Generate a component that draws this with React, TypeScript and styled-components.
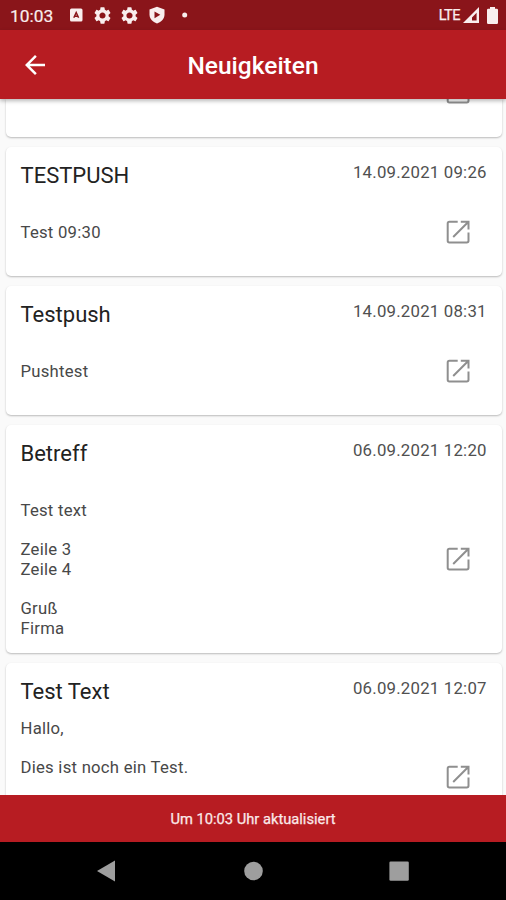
import React from "react";
import styled, { createGlobalStyle } from "styled-components";

const GlobalStyle = createGlobalStyle`
  * { box-sizing: border-box; }
  body { margin: 0; background: #fafafa; font-family: Roboto, sans-serif; }
`;

const Screen = styled.div`
  display: flex;
  flex-direction: column;
  width: 506px;
  height: 900px;
  overflow: hidden;
  background: #fafafa;
`;

const StatusBar = styled.header`
  flex: none;
  display: flex;
  align-items: center;
  height: 30px;
  padding: 0 8px 0 10px;
  background: #8a151a;
  color: #f9eeee;
`;

const Clock = styled.span`
  width: 59px;
  font-size: 17.4px;
  line-height: 20px;
  padding-top: 2px;
  -webkit-text-stroke: 0.2px #f9eeee;
`;

const Notifications = styled.div`
  display: flex;
  align-items: center;
  gap: 10px;
  flex: 1;
`;

const Network = styled.span`
  font-size: 14.5px;
  letter-spacing: -0.5px;
  margin-right: 3px;
  padding-top: 1px;
  -webkit-text-stroke: 0.25px #f9eeee;
`;

const Signals = styled.div`
  display: flex;
  align-items: center;
  gap: 8px;
`;

const AppBar = styled.div`
  flex: none;
  position: relative;
  z-index: 1;
  display: grid;
  grid-template-columns: 70px 1fr 70px;
  align-items: center;
  height: 69px;
  background: #b71c22;
  color: #fff;
  box-shadow: 0 2px 4px rgba(0, 0, 0, 0.28);
`;

const BackButton = styled.button`
  display: flex;
  justify-content: center;
  padding: 0;
  border: 0;
  background: none;
  color: inherit;
`;

const PageTitle = styled.h1`
  margin: 0;
  padding-top: 2px;
  text-align: center;
  font-size: 24.5px;
  font-weight: 500;
  line-height: 30px;
`;

const Feed = styled.main`
  flex: 1;
  min-height: 0;
  overflow: hidden;
  display: flex;
  flex-direction: column;
  justify-content: flex-start;
  gap: 10px;
  padding: 0 4.5px 0 5.5px;
`;

const Card = styled.article<{ $height: number; $clipped?: boolean }>`
  flex: none;
  display: flex;
  flex-direction: column;
  justify-content: ${(p) => (p.$clipped ? "flex-end" : "flex-start")};
  height: ${(p) => p.$height}px;
  padding: 0 15px;
  border-radius: ${(p) => (p.$clipped ? "0 0 5px 5px" : "5px")};
  background: #fff;
  box-shadow: 0 1px 2px rgba(0, 0, 0, 0.26);
`;

const CardHead = styled.div`
  display: flex;
  justify-content: space-between;
  align-items: flex-start;
  height: 52px;
  padding-top: 15px;
`;

const CardTitle = styled.h2`
  margin: 0;
  font-size: 22px;
  font-weight: 400;
  line-height: 28px;
  color: #222;
`;

const Stamp = styled.time`
  font-size: 16.8px;
  line-height: 20px;
  letter-spacing: 0.22px;
  margin-right: -0.22px;
  color: #505050;
`;

const CardBody = styled.div<{ $top: number; $height: number }>`
  display: flex;
  justify-content: space-between;
  align-items: center;
  height: ${(p) => p.$height}px;
  margin-top: ${(p) => p.$top}px;
  padding-right: 14px;
`;

const Message = styled.p`
  align-self: flex-start;
  margin: 0;
  padding-top: 1px;
  font-size: 16.7px;
  line-height: 19.65px;
  letter-spacing: 0.25px;
  white-space: pre-line;
  color: #484848;
`;

const ClippedIcon = styled.div`
  flex: none;
  display: flex;
  justify-content: flex-end;
  height: 60px;
  padding-right: 14px;
`;

const UpdateBar = styled.footer`
  flex: none;
  display: flex;
  align-items: center;
  justify-content: center;
  height: 47px;
  background: #b71c22;
  color: #fbeaea;
  font-size: 14.7px;
  -webkit-text-stroke: 0.25px #fbeaea;
`;

const NavBar = styled.nav`
  flex: none;
  display: grid;
  grid-template-columns: repeat(3, 146px);
  justify-content: center;
  align-items: center;
  justify-items: center;
  height: 58px;
  background: #000;
  color: #9e9e9e;
`;

const OpenIcon = () => (
  <svg width="30" height="30" viewBox="0 0 30 30" fill="none" stroke="#8f8f8f" strokeWidth="2">
    <path d="M14.7 4.7H6.4Q4.7 4.7 4.7 6.4V23.8Q4.7 25.5 6.4 25.5H23.8Q25.5 25.5 25.5 23.8V15.5" />
    <path d="M17.8 4.7H25.5V12.5M25.2 5L10.2 20" />
  </svg>
);

const GearIcon = () => (
  <svg width="17" height="17" viewBox="2 2 20 20" fill="currentColor">
    <path d="M19.14 12.94c.04-.3.06-.61.06-.94 0-.32-.02-.64-.07-.94l2.03-1.58a.49.49 0 0 0 .12-.61l-1.92-3.32a.488.488 0 0 0-.59-.22l-2.39.96c-.5-.38-1.03-.7-1.62-.94l-.36-2.54a.484.484 0 0 0-.48-.41h-3.84c-.24 0-.43.17-.47.41l-.36 2.54c-.59.24-1.13.57-1.62.94l-2.39-.96c-.22-.08-.47 0-.59.22L2.74 8.87c-.12.21-.08.47.12.61l2.03 1.58c-.05.3-.09.63-.09.94s.02.64.07.94l-2.03 1.58a.49.49 0 0 0-.12.61l1.92 3.32c.12.22.37.29.59.22l2.39-.96c.5.38 1.03.7 1.62.94l.36 2.54c.05.24.24.41.48.41h3.84c.24 0 .44-.17.47-.41l.36-2.54c.59-.24 1.13-.56 1.62-.94l2.39.96c.22.08.47 0 .59-.22l1.92-3.32c.12-.22.07-.47-.12-.61l-2.01-1.58zM12 15.6A3.61 3.61 0 0 1 8.4 12c0-1.98 1.62-3.6 3.6-3.6s3.6 1.62 3.6 3.6-1.62 3.6-3.6 3.6z" />
  </svg>
);

type Entry = {
  title: string;
  stamp: string;
  text: string;
  height: number;
  top: number;
  body: number;
};

const entries: Entry[] = [
  { title: "TESTPUSH", stamp: "14.09.2021 09:26", text: "Test 09:30", height: 129, top: 23, body: 20 },
  { title: "Testpush", stamp: "14.09.2021 08:31", text: "Pushtest", height: 129, top: 23, body: 20 },
  {
    title: "Betreff",
    stamp: "06.09.2021 12:20",
    text: "Test text\n\nZeile 3\nZeile 4\n\nGruß\nFirma",
    height: 228,
    top: 23,
    body: 118,
  },
  { title: "Test Text", stamp: "06.09.2021 12:07", text: "Hallo,\n\nDies ist noch ein Test.", height: 228, top: 3, body: 118 },
];

export default function App() {
  return (
    <>
      <GlobalStyle />
      <Screen>
        <StatusBar>
          <Clock>10:03</Clock>
          <Notifications>
            <svg width="15" height="14" viewBox="0 0 15 14">
              <rect x="1" y="0.5" width="12.5" height="13" rx="1.5" fill="currentColor" />
              <path d="M4.8 9.8L7.2 4.5L9.6 9.8M5.8 8.3H8.6" fill="none" stroke="#8a151a" strokeWidth="1.5" />
            </svg>
            <GearIcon />
            <GearIcon />
            <svg width="18" height="18" viewBox="0 0 18 18">
              <path d="M9 0.7L16.5 3.4V8.5C16.5 12.8 13.5 16 9 17.4C4.5 16 1.5 12.8 1.5 8.5V3.4Z" fill="currentColor" />
              <path d="M6.5 5.4L12.3 8.8L6.5 12.2Z" fill="#8a151a" />
            </svg>
            <svg width="18" height="6" viewBox="0 0 18 6">
              <circle cx="8.7" cy="3" r="2.5" fill="currentColor" />
            </svg>
          </Notifications>
          <Network>LTE</Network>
          <Signals>
            <svg width="16" height="16" viewBox="0 0 16 16">
              <path fillRule="evenodd" d="M16 0V16H0ZM13.6 5.8L9 10.6V13.6H13.6Z" fill="currentColor" />
            </svg>
            <svg width="11" height="17" viewBox="0 0 11 17">
              <path d="M3 0H8V1.7H9.8Q11 1.7 11 3V15.7Q11 17 9.8 17H1.2Q0 17 0 15.7V3Q0 1.7 1.2 1.7H3Z" fill="currentColor" />
            </svg>
          </Signals>
        </StatusBar>
        <AppBar>
          <BackButton aria-label="Zurück">
            <svg width="30" height="30" viewBox="0 0 24 24" fill="currentColor">
              <path d="M20 11H7.83l5.59-5.59L12 4l-8 8 8 8 1.41-1.41L7.83 13H20v-2z" />
            </svg>
          </BackButton>
          <PageTitle>Neuigkeiten</PageTitle>
        </AppBar>
        <Feed>
          <Card $height={38} $clipped>
            <ClippedIcon>
              <OpenIcon />
            </ClippedIcon>
          </Card>
          {entries.map((e) => (
            <Card key={e.stamp} $height={e.height}>
              <CardHead>
                <CardTitle>{e.title}</CardTitle>
                <Stamp>{e.stamp}</Stamp>
              </CardHead>
              <CardBody $top={e.top} $height={e.body}>
                <Message>{e.text}</Message>
                <OpenIcon />
              </CardBody>
            </Card>
          ))}
        </Feed>
        <UpdateBar>Um 10:03 Uhr aktualisiert</UpdateBar>
        <NavBar>
          <svg width="20" height="22" viewBox="0 0 20 22">
            <path d="M18 0.5V21.5L0 11Z" fill="currentColor" />
          </svg>
          <svg width="20" height="20" viewBox="0 0 20 20">
            <circle cx="10.5" cy="10" r="9.3" fill="currentColor" />
          </svg>
          <svg width="20" height="20" viewBox="0 0 20 20">
            <rect x="0.4" y="0.4" width="19.4" height="19.4" rx="1.3" fill="currentColor" />
          </svg>
        </NavBar>
      </Screen>
    </>
  );
}
